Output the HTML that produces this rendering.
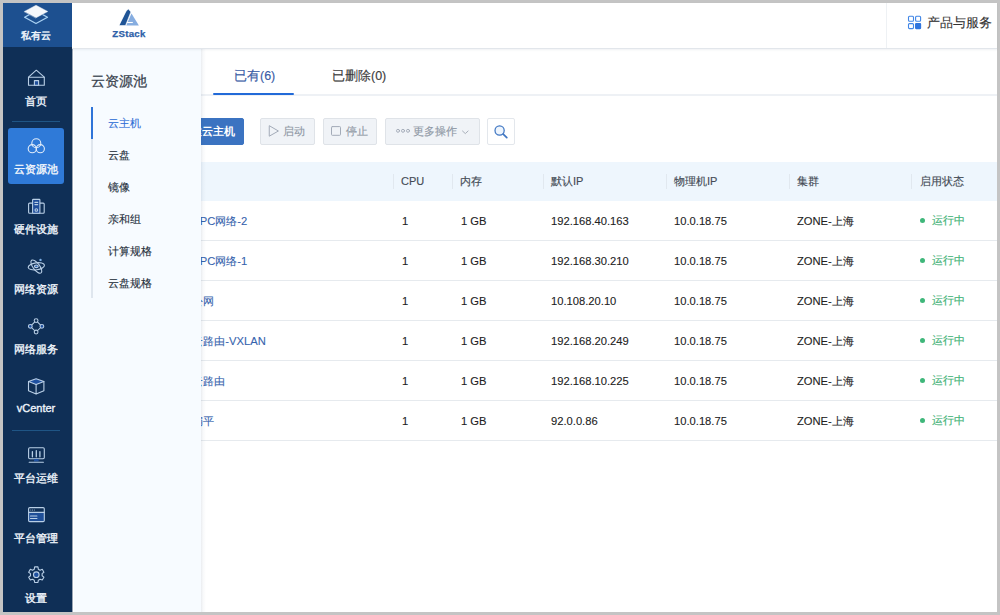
<!DOCTYPE html>
<html><head><meta charset="utf-8">
<style>
*{margin:0;padding:0;box-sizing:border-box}
html,body{width:1000px;height:615px;overflow:hidden;background:#c4c4c4;font-family:"Liberation Sans",sans-serif}
.a{position:absolute}
#app{left:3px;top:3px;width:994px;height:609px;background:#fff;overflow:hidden}
#nav{left:3px;top:3px;width:69px;height:609px;background:#0f2f56}
#navtop{left:3px;top:3px;width:69px;height:44px;background:#1d5090}
.nl{position:absolute;left:0px;width:72px;text-align:center;color:#eef4fb;font-size:11px;font-weight:normal;-webkit-text-stroke:0.35px #eef4fb;line-height:14px;white-space:nowrap}
.nd{position:absolute;left:12px;width:48px;height:1px;background:#1f5585}
#header{z-index:4;left:72px;top:3px;width:925px;height:46px;background:#fff;border-bottom:1px solid #e2e6eb;box-shadow:0 1px 2px rgba(30,50,80,0.07)}
#sub{z-index:2;left:74px;top:49px;width:127px;height:563px;background:#f7fbff}
#subsh{z-index:2;left:201px;top:49px;width:5px;height:563px;background:linear-gradient(to right,rgba(20,50,90,0.09),rgba(20,50,90,0.03) 40%,rgba(20,50,90,0))}
.si{z-index:3;position:absolute;left:108px;font-size:11px;line-height:14px;color:#26303c;-webkit-text-stroke:0.12px #26303c;white-space:nowrap}
.tab{position:absolute;font-size:12.5px;line-height:16px;white-space:nowrap}
.btn{position:absolute;top:118px;height:27px;border:1px solid #dfe3e8;background:#f0f3f7;border-radius:2px;color:#8f98a5;-webkit-text-stroke:0.15px #8f98a5;font-size:11.2px;line-height:25px;white-space:nowrap}
.th{position:absolute;top:174px;font-size:11px;line-height:14px;color:#444b55;-webkit-text-stroke:0.15px #444b55;white-space:nowrap}
.sep{position:absolute;top:174px;width:1px;height:15px;background:#e1e8ef}
.rl{position:absolute;left:201px;width:796px;height:1px;background:#e6eaee}
.td{position:absolute;font-size:11.2px;line-height:14px;color:#222;-webkit-text-stroke:0.1px #222;white-space:nowrap}
.nm{color:#3663ad;-webkit-text-stroke:0.1px #3663ad}
.st{color:#43b378;-webkit-text-stroke:0.15px #43b378}
.dot{position:absolute;left:920px;width:5px;height:5px;border-radius:50%;background:#3fb77a}
.logo{z-index:5;position:absolute;left:112.3px;top:29.2px;font-size:9.7px;font-weight:bold;color:#2d60a8;line-height:10px;letter-spacing:0.25px;-webkit-text-stroke:0.25px #2d60a8}
</style></head>
<body>
<div id="app" class="a"></div>
<div id="nav" class="a"></div>
<div id="navtop" class="a"></div>
<div class="a" style="left:72px;top:47px;width:1px;height:565px;background:#9aa6b5"></div>
<div id="header" class="a"></div>
<div id="sub" class="a"></div>
<div id="subsh" class="a"></div>

<!-- nav labels -->
<div class="nl" style="top:28.8px;font-size:10px;-webkit-text-stroke:0.45px #eef4fb">私有云</div>
<div class="nl" style="top:93.5px">首页</div>
<div class="nd" style="top:121px"></div>
<div class="a" style="left:8px;top:128px;width:56px;height:56px;background:#2f7ad8;border-radius:3px"></div>
<div class="nl" style="top:161.5px;font-weight:normal;color:#fff">云资源池</div>
<div class="nl" style="top:221.5px">硬件设施</div>
<div class="nl" style="top:281.5px">网络资源</div>
<div class="nl" style="top:341.5px">网络服务</div>
<div class="nl" style="top:400.5px">vCenter</div>
<div class="nd" style="top:430px"></div>
<div class="nl" style="top:470.5px">平台运维</div>
<div class="nl" style="top:530.5px">平台管理</div>
<div class="nl" style="top:590.5px">设置</div>

<!-- header -->
<div class="logo">ZStack</div>
<div class="a" style="z-index:5;left:886px;top:3px;width:1px;height:45px;background:#eef1f4"></div>
<div class="a" style="z-index:5;left:927px;top:15px;font-size:13px;line-height:16px;color:#333;-webkit-text-stroke:0.1px #333;white-space:nowrap">产品与服务</div>

<!-- submenu -->
<div class="a" style="z-index:3;left:91px;top:72px;font-size:14.3px;line-height:18px;color:#36404c;-webkit-text-stroke:0.25px #36404c;white-space:nowrap">云资源池</div>
<div class="a" style="z-index:3;left:91px;top:107px;width:2px;height:191px;background:#dfe6ee"></div>
<div class="a" style="z-index:3;left:91px;top:107px;width:2px;height:32px;background:#2f74d8"></div>
<div class="si" style="top:116px;color:#2f6fd6;-webkit-text-stroke:0.1px #2f6fd6">云主机</div>
<div class="si" style="top:148px">云盘</div>
<div class="si" style="top:180px">镜像</div>
<div class="si" style="top:212px">亲和组</div>
<div class="si" style="top:244px">计算规格</div>
<div class="si" style="top:276px">云盘规格</div>

<!-- tabs -->
<div class="tab" style="left:234px;top:67.5px;color:#3a5ca6;-webkit-text-stroke:0.15px #3a5ca6">已有(6)</div>
<div class="tab" style="left:332px;top:67.5px;color:#3d3d3d;-webkit-text-stroke:0.15px #3d3d3d">已删除(0)</div>
<div class="a" style="left:201px;top:94px;width:796px;height:1.5px;background:#eef1f5"></div>
<div class="a" style="left:213px;top:93px;width:81px;height:2px;background:#226ad8;border-radius:1px"></div>

<!-- toolbar -->
<div class="btn" style="left:160px;width:84px;background:#3b73c1;border-color:#3b73c1;color:#fff;-webkit-text-stroke:0;font-weight:bold;padding-left:18.5px;font-size:11px;line-height:25px">创建云主机</div>
<div class="btn" style="left:260px;width:55px;padding-left:22px">启动</div>
<div class="btn" style="left:323px;width:54px;padding-left:22px">停止</div>
<div class="btn" style="left:385px;width:95px;padding-left:27px">更多操作</div>
<div class="a" style="left:487px;top:118px;width:28px;height:27px;border:1px solid #e3e7ec;border-radius:2px;background:#fff"></div>

<!-- table header -->
<div class="a" style="left:201px;top:162px;width:796px;height:39px;background:#eef6fd"></div>
<div class="sep" style="left:393px"></div>
<div class="sep" style="left:452px"></div>
<div class="sep" style="left:543px"></div>
<div class="sep" style="left:666px"></div>
<div class="sep" style="left:789px"></div>
<div class="sep" style="left:911px"></div>
<div class="th" style="left:401px">CPU</div>
<div class="th" style="left:460px">内存</div>
<div class="th" style="left:551px">默认IP</div>
<div class="th" style="left:674px">物理机IP</div>
<div class="th" style="left:797px">集群</div>
<div class="th" style="left:920px">启用状态</div>
<!-- rows -->
<div class="rl" style="top:240px"></div>
<div class="td nm" style="left:171.8px;top:213.5px">VM-VPC网络-2</div>
<div class="td" style="left:402px;top:214px">1</div>
<div class="td" style="left:461px;top:214px">1 GB</div>
<div class="td" style="left:551px;top:214px">192.168.40.163</div>
<div class="td" style="left:674px;top:214px">10.0.18.75</div>
<div class="td" style="left:797px;top:214px">ZONE-上海</div>
<div class="dot" style="top:218px"></div>
<div class="td st" style="left:932px;top:213px">运行中</div>
<div class="rl" style="top:280px"></div>
<div class="td nm" style="left:171.8px;top:253.5px">VM-VPC网络-1</div>
<div class="td" style="left:402px;top:254px">1</div>
<div class="td" style="left:461px;top:254px">1 GB</div>
<div class="td" style="left:551px;top:254px">192.168.30.210</div>
<div class="td" style="left:674px;top:254px">10.0.18.75</div>
<div class="td" style="left:797px;top:254px">ZONE-上海</div>
<div class="dot" style="top:258px"></div>
<div class="td st" style="left:932px;top:253px">运行中</div>
<div class="rl" style="top:320px"></div>
<div class="td nm" style="left:171.8px;top:293.5px">VM-公网</div>
<div class="td" style="left:402px;top:294px">1</div>
<div class="td" style="left:461px;top:294px">1 GB</div>
<div class="td" style="left:551px;top:294px">10.108.20.10</div>
<div class="td" style="left:674px;top:294px">10.0.18.75</div>
<div class="td" style="left:797px;top:294px">ZONE-上海</div>
<div class="dot" style="top:298px"></div>
<div class="td st" style="left:932px;top:293px">运行中</div>
<div class="rl" style="top:360px"></div>
<div class="td nm" style="left:171.8px;top:333.5px">VM-云路由-VXLAN</div>
<div class="td" style="left:402px;top:334px">1</div>
<div class="td" style="left:461px;top:334px">1 GB</div>
<div class="td" style="left:551px;top:334px">192.168.20.249</div>
<div class="td" style="left:674px;top:334px">10.0.18.75</div>
<div class="td" style="left:797px;top:334px">ZONE-上海</div>
<div class="dot" style="top:338px"></div>
<div class="td st" style="left:932px;top:333px">运行中</div>
<div class="rl" style="top:400px"></div>
<div class="td nm" style="left:171.8px;top:373.5px">VM-云路由</div>
<div class="td" style="left:402px;top:374px">1</div>
<div class="td" style="left:461px;top:374px">1 GB</div>
<div class="td" style="left:551px;top:374px">192.168.10.225</div>
<div class="td" style="left:674px;top:374px">10.0.18.75</div>
<div class="td" style="left:797px;top:374px">ZONE-上海</div>
<div class="dot" style="top:378px"></div>
<div class="td st" style="left:932px;top:373px">运行中</div>
<div class="rl" style="top:440px"></div>
<div class="td nm" style="left:171.8px;top:413.5px">VM-扁平</div>
<div class="td" style="left:402px;top:414px">1</div>
<div class="td" style="left:461px;top:414px">1 GB</div>
<div class="td" style="left:551px;top:414px">92.0.0.86</div>
<div class="td" style="left:674px;top:414px">10.0.18.75</div>
<div class="td" style="left:797px;top:414px">ZONE-上海</div>
<div class="dot" style="top:418px"></div>
<div class="td st" style="left:932px;top:413px">运行中</div>
<svg class="a" style="left:0;top:0;z-index:10;pointer-events:none" width="1000" height="615" viewBox="0 0 1000 615">
<g fill="none" stroke-linejoin="round" stroke-linecap="round">
<!-- layers -->
<path d="M24.6 17.2 L36 10.9 L47.5 17.2 L36 23.5 Z" stroke="#a9d1f2" stroke-width="1.3"/>
<path d="M23.4 11.5 L36 4.8 L48.7 11.5 L36 18.3 Z" fill="#1d5090"/>
<path d="M24.3 11.5 L36 5.2 L47.8 11.5 L36 17.8 Z" fill="#f4f7fb" stroke="#f4f7fb" stroke-width="0.4"/>
<!-- house -->
<g stroke="#b9cfe6" stroke-width="1.1">
<path d="M28.5 85.3 V77.2 L36.3 70.2 L44.3 77.2 V85.3 Z"/>
<path d="M28.5 77.3 H44.3"/>
<rect x="34.4" y="80.6" width="4.2" height="4.7" fill="#1e4f9c"/>
</g>
<!-- venn -->
<g stroke="#e2edfa" stroke-width="1.1">
<circle cx="36.3" cy="143.3" r="4.5"/>
<circle cx="32.3" cy="148.7" r="4.1"/>
<circle cx="40.3" cy="148.7" r="4.1"/>
</g>
<!-- hardware -->
<g stroke="#b9cfe6" stroke-width="1.1">
<rect x="28.6" y="203.1" width="15.6" height="10.2" rx="1"/>
<rect x="32.6" y="199.4" width="7.3" height="13.9" rx="0.6" fill="#1f4d9a"/>
<path d="M34.9 202.4 H37.7 M34.9 204.6 H37.7"/>
<circle cx="36.3" cy="210" r="1.3"/>
</g>
<!-- atom -->
<g stroke="#b9cfe6" stroke-width="1.1">
<ellipse cx="36.3" cy="266.3" rx="8.2" ry="3.5" transform="rotate(-8 36.5 266.2)"/>
<ellipse cx="36.3" cy="266.3" rx="7.9" ry="3.3" transform="rotate(53 36 266.5)"/>
<ellipse cx="36.3" cy="266.3" rx="1.9" ry="1.3" fill="#2a64b8"/>
<circle cx="40.5" cy="259.9" r="1.2" fill="#7fb0e6" stroke="none"/>
</g>
<!-- network svc -->
<g stroke="#b9cfe6" stroke-width="1.05">
<path d="M36.1 320.6 L30.3 326.3 L36.1 332 L41.9 326.3 Z"/>
<circle cx="36.1" cy="320.6" r="1.9" fill="#0f2f56"/>
<circle cx="36.1" cy="332" r="1.9" fill="#0f2f56"/>
<circle cx="30.3" cy="326.3" r="1.9" fill="#1e50a0"/>
<circle cx="41.9" cy="326.3" r="1.9" fill="#1e50a0"/>
</g>
<!-- cube -->
<g stroke="#b9cfe6" stroke-width="1.1">
<path d="M28.5 381.6 L36.1 378.7 L43.9 381.6 L36.1 384.5 Z" fill="#1e50a0"/>
<path d="M28.5 381.6 V390.8 L36.1 394.1 L43.9 390.8 V381.6 M36.1 384.5 V394.1"/>
</g>
<!-- monitor -->
<g stroke="#b9cfe6" stroke-width="1.1">
<rect x="28.6" y="447.8" width="15.7" height="11" rx="1.2"/>
<path d="M32.4 451.6 V456.8 M36.3 450.6 V456.8 M39.9 451.6 V456.8" stroke-width="1.3"/>
<rect x="34" y="459" width="4.6" height="2.4" fill="#1e50a0" stroke="none"/>
<path d="M29.2 462.3 H43.4"/>
</g>
<!-- browser -->
<g stroke="#b9cfe6" stroke-width="1.1">
<rect x="28.7" y="512.6" width="15.5" height="8.8" fill="#1f4f98" stroke="none"/>
<rect x="28.6" y="507.6" width="15.7" height="14" rx="1.2"/>
<path d="M28.6 512.4 H44.3"/>
<path d="M30.5 516 H36.9 M30.5 518.5 H36.9" stroke-width="1.2"/>
<circle cx="30.8" cy="510.1" r="0.5" fill="#b9cfe6" stroke="none"/>
<circle cx="32.5" cy="510.1" r="0.5" fill="#b9cfe6" stroke="none"/>
<circle cx="34.3" cy="510.1" r="0.5" fill="#b9cfe6" stroke="none"/>
</g>
<!-- gear -->
<g stroke="#b9cfe6" stroke-width="1.1">
<path d="M34.28 569.16 L34.64 566.87 L37.96 566.87 L38.32 569.16 L40.09 570.18 L42.25 569.35 L43.91 572.23 L42.11 573.68 L42.11 575.72 L43.91 577.17 L42.25 580.05 L40.09 579.22 L38.32 580.24 L37.96 582.53 L34.64 582.53 L34.28 580.24 L32.51 579.22 L30.35 580.05 L28.69 577.17 L30.49 575.72 L30.49 573.68 L28.69 572.23 L30.35 569.35 L32.51 570.18Z"/>
<circle cx="36.3" cy="574.7" r="2.8" fill="#1e50a0"/>
</g>
<!-- zstack logo -->
<path d="M126.2 25.6 L131.5 13.6 L138.9 25.6 Z" fill="#86ade0" stroke="none"/>
<path d="M127 22.5 H132.8" stroke="#fff" stroke-width="1.1" stroke-linecap="butt"/>
<path d="M126.3 10.9 L128.4 8.9 L130.9 11.9 L125.5 25.6 L119.2 25.6 Z" fill="#1f5496" stroke="#fff" stroke-width="0.6"/>
<!-- product grid -->
<g stroke="#4186e6" stroke-width="1.1">
<rect x="908.5" y="16.3" width="5" height="5" rx="1"/>
<rect x="915.6" y="16.3" width="5" height="5" rx="1"/>
<rect x="908.5" y="23.6" width="5" height="5" rx="1"/>
<rect x="915.6" y="23.6" width="5" height="5" rx="0.6" fill="#2e74de" stroke="#2e74de"/>
</g>
<!-- toolbar icons -->
<path d="M269.6 125.9 L278.4 131 L269.6 136 Z" stroke="#a3abb8" stroke-width="1"/>
<rect x="331.5" y="126.6" width="9" height="8.7" rx="0.8" stroke="#a3abb8" stroke-width="1"/>
<circle cx="398" cy="130.8" r="1.5" stroke="#a0a8b5" stroke-width="0.9"/>
<circle cx="403" cy="130.8" r="1.5" stroke="#a0a8b5" stroke-width="0.9"/>
<circle cx="408" cy="130.8" r="1.5" stroke="#a0a8b5" stroke-width="0.9"/>
<path d="M462.5 131 L465.3 133.6 L468.1 131" stroke="#a9b0ba" stroke-width="1"/>
<circle cx="499.6" cy="130.5" r="4.6" stroke="#3f76c2" stroke-width="1.25" fill="#eef5fd"/>
<path d="M503.2 134.1 L506.8 137.6" stroke="#3f76c2" stroke-width="1.7"/>
</g>
</svg>
</body></html>
